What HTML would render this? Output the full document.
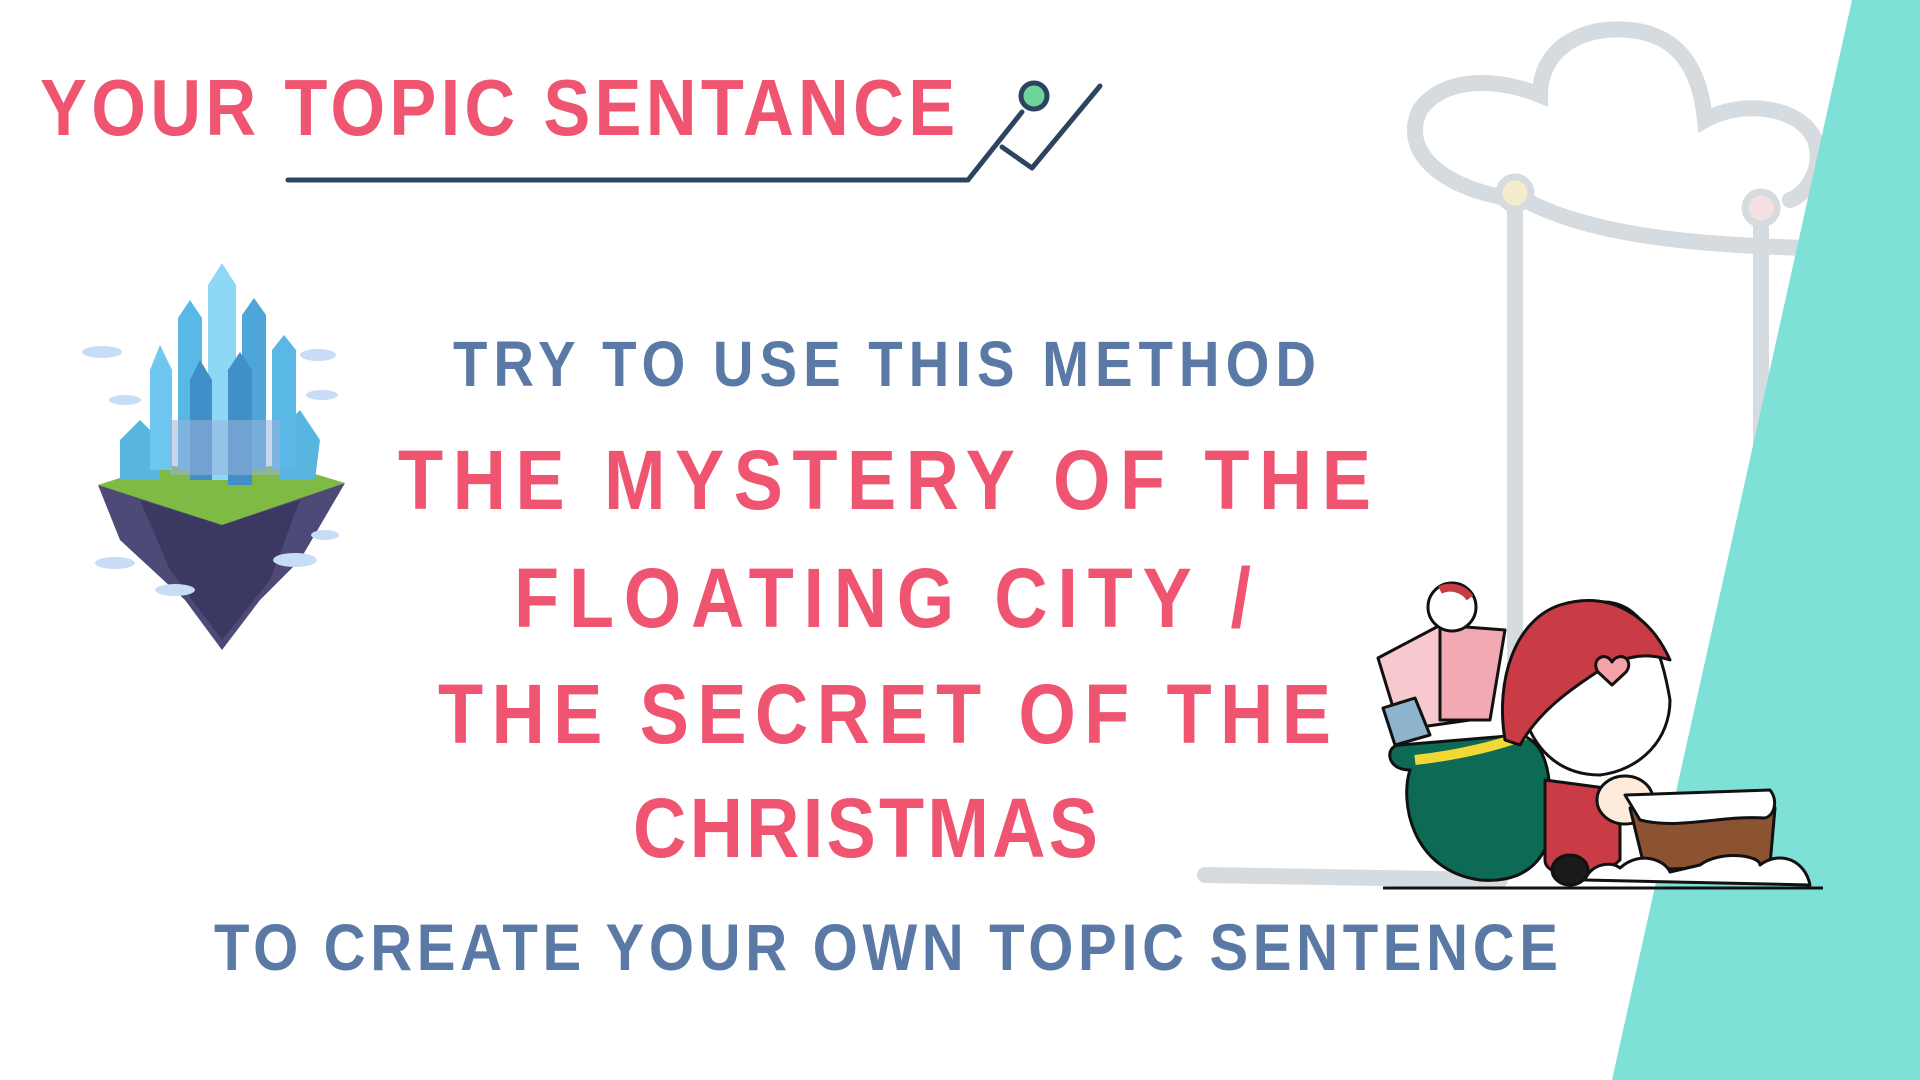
<!DOCTYPE html>
<html><head><meta charset="utf-8"><style>
html,body{margin:0;padding:0;background:#fff;width:1920px;height:1080px;overflow:hidden}
svg{display:block}
text{font-family:"Liberation Sans Narrow","Liberation Sans",sans-serif;font-weight:bold}
</style></head><body>
<svg width="1920" height="1080" viewBox="0 0 1920 1080" xmlns="http://www.w3.org/2000/svg">
<g fill="none" stroke="#d6dbdf" stroke-width="16" stroke-linecap="round">
<path d="M1520 200 C1440 190 1400 150 1420 110 C1440 80 1490 75 1540 95 C1540 50 1580 25 1630 30 C1680 35 1700 70 1705 120 C1740 100 1800 105 1815 140 C1825 170 1805 195 1790 200"/>
<path d="M1525 200 C1600 240 1720 245 1805 248"/>
<path d="M1515 205 L1515 870 M1761 210 L1761 560"/>
<path d="M1205 875 L1500 880"/>
</g>
<circle cx="1515" cy="193" r="16" fill="#f3eccd" stroke="#d6dbdf" stroke-width="7"/>
<circle cx="1761" cy="208" r="16" fill="#f6dfe3" stroke="#d6dbdf" stroke-width="7"/>
<polygon points="1852,0 1920,0 1920,1080 1612,1080" fill="#7de1d8"/>
<g transform="scale(0.88,1)">
<text x="45.5" y="135" font-size="80" fill="#ef5470" textLength="1040" lengthAdjust="spacing">YOUR TOPIC SENTANCE</text>
<text x="514.8" y="386" font-size="64" fill="#5a7aa5" textLength="980.7" lengthAdjust="spacing">TRY TO USE THIS METHOD</text>
<text x="452.3" y="509" font-size="84" fill="#ef5470" textLength="1105.7" lengthAdjust="spacing">THE MYSTERY OF THE</text>
<text x="584.1" y="627" font-size="84" fill="#ef5470" textLength="837.5" lengthAdjust="spacing">FLOATING CITY /</text>
<text x="497.7" y="743" font-size="84" fill="#ef5470" textLength="1014.8" lengthAdjust="spacing">THE SECRET OF THE</text>
<text x="719.3" y="857" font-size="84" fill="#ef5470" textLength="528.4" lengthAdjust="spacing">CHRISTMAS</text>
<text x="243.2" y="970" font-size="66" fill="#5a7aa5" textLength="1527.3" lengthAdjust="spacing">TO CREATE YOUR OWN TOPIC SENTENCE</text>
</g>
<g fill="none" stroke="#2d4460" stroke-width="5" stroke-linecap="round" stroke-linejoin="round">
<path d="M288 180 L968 180 L1022 112"/>
<path d="M1002 147 L1032 168 L1100 86"/>
</g>
<circle cx="1034" cy="96" r="13" fill="#6fd49a" stroke="#2d4460" stroke-width="5"/>
<g>
<polygon points="98,485 222,520 345,483 300,560 260,600 222,650 185,600 120,540" fill="#4d4a78"/>
<polygon points="140,500 222,525 300,500 270,580 222,640 170,570" fill="#3b3862"/>
<polygon points="98,485 160,465 222,470 285,465 345,483 222,525" fill="#7fba44"/>
<polygon points="120,440 140,420 160,440 160,480 120,480" fill="#57b5e0"/>
<polygon points="280,430 300,410 320,440 315,480 280,480" fill="#57b5e0"/>
<polygon points="150,370 160,345 172,370 172,470 150,470" fill="#6ec7ee"/>
<polygon points="178,318 190,300 202,318 202,470 178,470" fill="#5ab8e6"/>
<polygon points="208,285 222,263 236,285 236,480 208,480" fill="#8dd8f5"/>
<polygon points="242,315 254,298 266,315 266,470 242,470" fill="#4ea6d8"/>
<polygon points="272,350 284,335 296,350 296,470 272,470" fill="#5ab8e6"/>
<polygon points="190,380 200,360 212,380 212,480 190,480" fill="#3f8fc8"/>
<polygon points="228,370 240,352 252,370 252,485 228,485" fill="#3f8fc8"/>
<polygon points="170,420 280,420 280,475 170,475" fill="#9ab3da" opacity=".55"/>
<g fill="#c7dcf5"><ellipse cx="102" cy="352" rx="20" ry="6"/><ellipse cx="318" cy="355" rx="18" ry="6"/><ellipse cx="125" cy="400" rx="16" ry="5"/><ellipse cx="322" cy="395" rx="16" ry="5"/><ellipse cx="115" cy="563" rx="20" ry="6"/><ellipse cx="295" cy="560" rx="22" ry="7"/><ellipse cx="175" cy="590" rx="20" ry="6"/><ellipse cx="325" cy="535" rx="14" ry="5"/></g>
</g>
<g stroke="#111" stroke-width="3" stroke-linejoin="round">
<path d="M1378 658 L1450 620 L1470 720 L1400 730 Z" fill="#f7c9cf"/>
<path d="M1440 625 L1505 630 L1490 720 L1440 720 Z" fill="#f1a9b3"/>
<path d="M1383 708 L1415 698 L1430 735 L1395 745 Z" fill="#8eb3cc"/>
<circle cx="1452" cy="607" r="24" fill="#fff"/>
<path d="M1440 590 A24 24 0 0 1 1470 598" stroke="#c93b45" stroke-width="8" fill="none"/>
<path d="M1400 745 C1385 745 1385 770 1410 770 C1400 800 1410 870 1480 880 C1540 885 1560 840 1550 790 C1548 760 1540 740 1520 735 Z" fill="#0d6b55"/>
<path d="M1415 760 C1460 755 1500 745 1525 735" stroke="#f2d834" stroke-width="10" fill="none"/>
<path d="M1545 780 L1545 860 C1545 880 1600 880 1620 860 L1620 790 Z" fill="#c93b45"/>
<ellipse cx="1570" cy="870" rx="18" ry="15" fill="#1a1a1a"/>
<path d="M1520 700 C1510 640 1545 610 1600 602 C1640 600 1660 640 1670 700 C1670 740 1640 770 1600 775 C1560 775 1530 750 1520 700 Z" fill="#fff"/>
<path d="M1505 740 C1495 680 1515 620 1560 605 C1610 590 1650 615 1670 660 C1640 650 1620 660 1600 670 C1570 690 1540 710 1520 745 Z" fill="#c93b45"/>
<path d="M1598 672 C1590 660 1605 650 1612 662 C1620 650 1635 660 1626 672 L1612 685 Z" fill="#f4a3ab"/>
<ellipse cx="1625" cy="800" rx="28" ry="24" fill="#fdecdc"/>
<path d="M1630 808 L1775 808 L1770 865 L1645 870 Z" fill="#8b5331"/>
<path d="M1625 795 L1770 790 C1778 800 1775 815 1765 818 C1720 815 1680 830 1640 820 Z" fill="#fff"/>
<path d="M1585 880 C1590 865 1610 860 1620 868 C1640 850 1665 860 1670 872 L1700 865 C1720 850 1760 855 1760 865 C1780 850 1805 860 1810 885 Z" fill="#fff"/>
</g>
<line x1="1383" y1="888" x2="1823" y2="888" stroke="#111" stroke-width="3"/>
</svg>
</body></html>
